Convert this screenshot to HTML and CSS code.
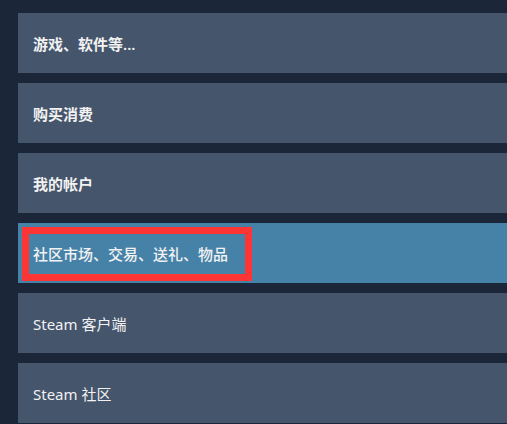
FILE: index.html
```html
<!DOCTYPE html>
<html lang="zh-CN">
<head>
    <meta charset="UTF-8">
    <meta name="viewport" content="width=device-width, initial-scale=1.0">
    <title>Steam 客服</title>
    <link rel="stylesheet" href="styles.css">
</head>
<body>

<div class="menu">
    <div class="item bold">游戏、软件等...</div>
    <div class="item bold">购买消费</div>
    <div class="item bold">我的帐户</div>
    <div class="item active">社区市场、交易、送礼、物品<span class="marker"></span></div>
    <div class="item">Steam 客户端</div>
    <div class="item">Steam 社区</div>
</div>

</body>
</html>
```

FILE: styles.css
```css
body {
    background-color: #1b2638;
    color: #f2f2f2;
    font-family: "Noto Sans", "Noto Sans CJK SC", sans-serif;
    margin: 0;
    padding: 13px 0 0 18px;
    overflow: hidden;
}
.menu {
    display: flex;
    flex-direction: column;
    gap: 10px;
}
.item {
    position: relative;
    height: 60px;
    display: flex;
    align-items: center;
    padding-left: 15px;
    background-color: #45556b;
    font-size: 15px;
    white-space: nowrap;
}
.item.bold {
    font-weight: 600;
}
.item.active {
    background-color: #4682a8;
    font-weight: 500;
}
.marker {
    position: absolute;
    left: 4px;
    top: 4px;
    width: 230px;
    height: 54px;
    box-sizing: border-box;
    border: 7px solid #fd3535;
}
```
